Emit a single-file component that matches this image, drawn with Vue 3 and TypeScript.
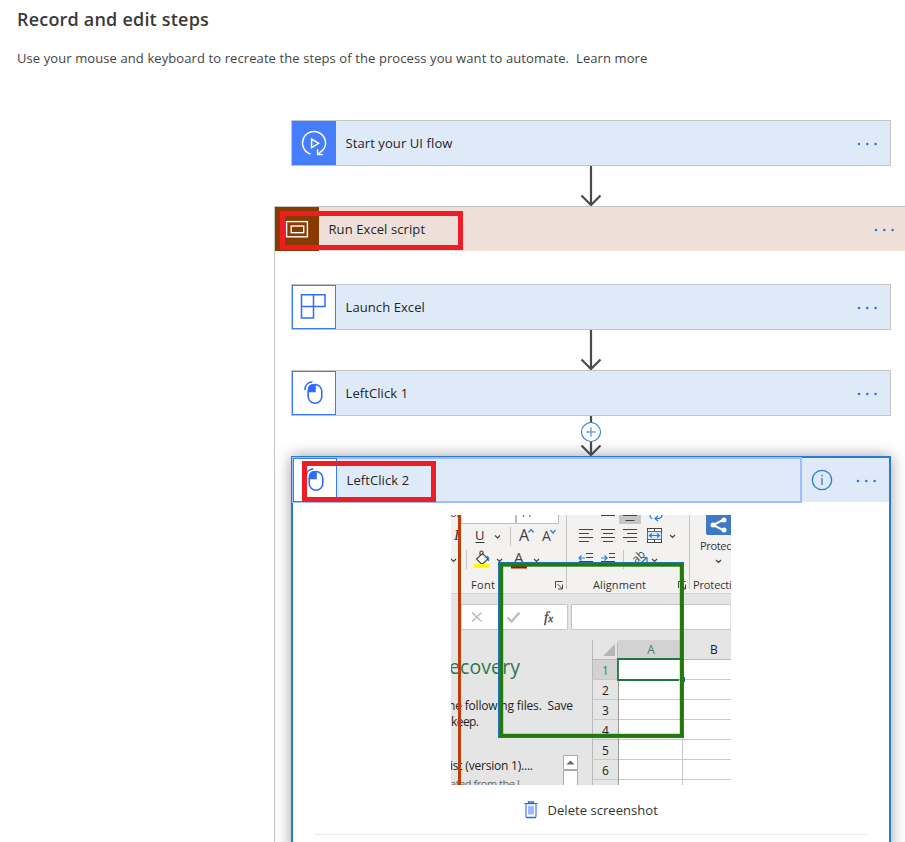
<script setup lang="ts">
interface Row { y: number; label: string }
const gridRows: Row[] = [
  { y: 670, label: '1' },
  { y: 690.5, label: '2' },
  { y: 710.5, label: '3' },
  { y: 730.5, label: '4' },
  { y: 750.5, label: '5' },
  { y: 770.5, label: '6' },
]
const lineYs: number[] = [679.5, 699.5, 719.5, 739.5, 759.5, 779.5]
const mouseBody = 'M23 13.5h0a6.8 6.8 0 0 1 6.8 6.8v5.2a6.8 6.8 0 0 1-13.6 0v-5.2a6.8 6.8 0 0 1 6.8-6.8z'
const mouseButton = 'M23.8 13.3v8h-8v-3c0-3 2-5 5-5z'
const mouseWave = 'M12.9 19c.2-4.600 3-8 7.500-8.300'
</script>

<template>
  <main class="page">
    <h1 class="title"><span>Record and edit steps</span></h1>
    <p class="intro">Use your mouse and keyboard to recreate the steps of the process you want to automate.&nbsp; <a>Learn more</a></p>

    <section class="flow">
      <div class="card first">
        <div class="tile solid">
          <svg viewBox="0 0 44 44" fill="none" stroke="#fff" stroke-width="1.500">
            <path d="M18.600 33A11.500 11.500 0 1 1 32.300 27.200C30.800 29.800 28.500 31 25.600 33.300" />
            <path d="M25.600 28.300v5.200h5.200M19.600 18v8.600l7-4.300z" />
          </svg>
        </div>
        <span class="label">Start your UI flow</span>
        <svg class="dots" viewBox="0 0 20 4"><circle cx="2" cy="2" r="1.300" /><circle cx="10.300" cy="2" r="1.300" /><circle cx="18.600" cy="2" r="1.300" /></svg>
      </div>
      <svg class="arrow" viewBox="0 0 24 40"><path d="M12 0v38M2.500 29.500l9.500 9.500 9.500-9.500" /></svg>

      <div class="scope">
        <div class="scope-head">
          <div class="tile brown">
            <svg viewBox="0 0 44 44" fill="none" stroke="#fff" stroke-width="1.400">
              <rect x="11.600" y="14.600" width="20.800" height="15.200" />
              <rect x="16.200" y="19" width="12.500" height="6.700" />
            </svg>
          </div>
          <span class="label">Run Excel script</span>
          <svg class="dots" viewBox="0 0 20 4"><circle cx="2" cy="2" r="1.300" /><circle cx="10.300" cy="2" r="1.300" /><circle cx="18.600" cy="2" r="1.300" /></svg>
          <span class="mark mark-scope"></span>
        </div>

        <div class="steps">
          <div class="card">
            <div class="tile">
              <svg viewBox="0 0 44 44" fill="none" stroke="#2f6bff" stroke-width="1.500">
                <path d="M9.500 9.800h23.500v11.700H9.500zM9.500 21.500v11.500h12V9.800" />
              </svg>
            </div>
            <span class="label">Launch Excel</span>
            <svg class="dots" viewBox="0 0 20 4"><circle cx="2" cy="2" r="1.300" /><circle cx="10.300" cy="2" r="1.300" /><circle cx="18.600" cy="2" r="1.300" /></svg>
          </div>
          <svg class="arrow" viewBox="0 0 24 40"><path d="M12 0v38M2.500 29.500l9.500 9.500 9.500-9.500" /></svg>

          <div class="card">
            <div class="tile">
              <svg viewBox="0 0 44 44" fill="none" stroke="#2f6bff" stroke-width="1.600">
                <path :d="mouseBody" /><path :d="mouseButton" fill="#2f6bff" stroke="none" /><path :d="mouseWave" />
              </svg>
            </div>
            <span class="label">LeftClick 1</span>
            <svg class="dots" viewBox="0 0 20 4"><circle cx="2" cy="2" r="1.300" /><circle cx="10.300" cy="2" r="1.300" /><circle cx="18.600" cy="2" r="1.300" /></svg>
          </div>
          <svg class="arrow" viewBox="0 0 24 40">
            <path d="M12 0v38M2.500 29.500l9.500 9.500 9.500-9.500" />
            <circle cx="12" cy="16" r="9.500" fill="#fff" stroke="#2b7de0" />
            <path class="plus" d="M7.300 16h9.400M12 11.300v9.400" />
          </svg>

          <div class="selected">
            <div class="selected-head">
              <div class="focus">
                <div class="tile">
                  <svg viewBox="0 0 44 44" fill="none" stroke="#2f6bff" stroke-width="1.600">
                    <path :d="mouseBody" /><path :d="mouseButton" fill="#2f6bff" stroke="none" /><path :d="mouseWave" />
                  </svg>
                </div>
                <span class="label">LeftClick 2</span>
              </div>
              <svg class="info" viewBox="0 0 22 22"><circle cx="11" cy="11" r="9.700" /><path d="M11 9v7M11 5.800v1.700" /></svg>
              <svg class="dots" viewBox="0 0 20 4"><circle cx="2" cy="2" r="1.300" /><circle cx="10.300" cy="2" r="1.300" /><circle cx="18.600" cy="2" r="1.300" /></svg>
              <span class="mark mark-click"></span>
            </div>

            <svg class="shot" viewBox="451 515 280 270">
              <rect x="451" y="515" width="280" height="270" fill="#e5e5e5" />
              <rect x="451" y="515" width="280" height="78" fill="#f3f2f1" />
              <path d="M451 593.500h280" stroke="#d2d2d2" />
              <!-- ribbon, font group -->
              <path d="M461 515v8.500h54.500V515M516.500 515v8.500h42V515" fill="#fff" stroke="#bdbdbd" />
              <g fill="#444" font-size="11"><text x="450" y="517">or</text><text x="520" y="517">11</text></g>
              <text x="454" y="540" class="serif">I</text>
              <text x="475" y="540" font-size="13" fill="#333">U</text>
              <path d="M475.500 542.500h9" stroke="#333" />
              <text x="519" y="541" font-size="16" fill="#444">A</text>
              <text x="542" y="541" font-size="14" fill="#444">A</text>
              <path d="M528.500 532.500l2.500-3 2.500 3M550.500 530l2.500 3 2.500-3" class="blue" />
              <path d="M510.500 527v19M466.500 550v19M566.500 515v74M689.500 515v74M623.500 550v19" stroke="#c8c6c4" />
              <g class="chev">
                <path d="M495 535.500l2.500 2.500 2.500-2.500M497 559l2.500 2.500 2.500-2.500M534 559l2.500 2.500 2.500-2.500M451 559l2.500 2.500 2.500-2.500M670 535l2.500 2.500 2.500-2.500M652 559l2.500 2.500 2.500-2.500M716 560l2.500 2.500 2.500-2.500" />
              </g>
              <path d="M476.500 559l6-5.500 5.500 5.500-6 5.500zM480 556v-4q1.500-2 3 0v3" fill="#fff" stroke="#444" stroke-width="1.200" />
              <path d="M487 556q2.500 2 1.500 5" class="blue" />
              <rect x="474" y="564" width="16" height="4" fill="#ff0" />
              <text x="514" y="563" font-size="15" fill="#444">A</text>
              <rect x="511" y="565" width="16" height="3.500" fill="#c00000" />
              <text x="471" y="589" textLength="24">Font</text>
              <path d="M555.500 588v-6.500h7M557.500 584l5 5m0-4.500v4.500h-4.500" class="thin" />
              <!-- ribbon, alignment group -->
              <rect x="619" y="515" width="22" height="9" fill="#c8c6c4" />
              <path d="M601 515.500h14M623 515.500h14M625.500 520.500h9" class="dark" />
              <path d="M579 529.500h14M579 533.500h10M579 537.500h14M579 541.500h10M601 529.500h14M603 533.500h10M601 537.500h14M603 541.500h10M623 529.500h14M627 533.500h10M623 537.500h14M627 541.500h10" class="dark" />
              <path d="M586 553.500h7M586 557.500h7M579 561.500h14M609 553.500h6M609 557.500h6M601 561.500h14" class="dark" />
              <path d="M585 558h-6m2.500-2.500L579 558l2.500 2.500M601 558h6m-2.500-2.500L607 558l-2.500 2.500" class="blue" />
              <path d="M650 515q0 3.500 2.500 3.500M658 516l-3 2.500 3 2.500M655 518.500h4q3-.5 3-3.500" class="blue" />
              <rect x="647.500" y="528.500" width="14" height="14" fill="#fff" stroke="#444" />
              <path d="M654.500 528.500v14" stroke="#444" />
              <rect x="647.500" y="531.500" width="14" height="8" fill="#d8ebfa" stroke="#2e75b6" />
              <path d="M649.500 535.500h10m-7.500-2l-2.500 2 2.500 2m5-4l2.500 2-2.500 2" class="blue" />
              <text font-size="11.500" fill="#444" transform="translate(636 564) rotate(-42)">ab</text>
              <path d="M640 564l7-6.500m-4.500 0h4.500v4.500" class="blue" />
              <text x="593" y="589" textLength="53">Alignment</text>
              <path d="M678.500 588v-6.500h7M680.500 584l5 5m0-4.500v4.500h-4.500" class="thin" />
              <!-- ribbon, protection group -->
              <path d="M706 515h25v20h-23q-2 0-2-2z" fill="#3f78c6" />
              <path d="M723 520l-10 5 10 5" fill="none" stroke="#fff" stroke-width="2" />
              <g fill="#fff"><circle cx="724" cy="520" r="2.500" /><circle cx="713" cy="525" r="2.500" /><circle cx="724" cy="530" r="2.500" /></g>
              <text x="700" y="550" textLength="35">Protect</text>
              <text x="693" y="589" textLength="52">Protection</text>
              <!-- formula bar -->
              <path d="M461 604.500h106.500v25H461zM571.500 604.500H731v25H571.500z" fill="#fff" stroke="#c6c6c6" />
              <path d="M472 612.500l9.500 9M481.500 612.500l-9.500 9" stroke="#bdbdbd" stroke-width="1.600" />
              <path d="M507.500 617.500l4 4 8-9" fill="none" stroke="#bdbdbd" stroke-width="2.400" />
              <text x="544" y="621.500" class="fx">f<tspan font-size="11">x</tspan></text>
              <!-- worksheet -->
              <rect x="618" y="659" width="113" height="126" fill="#fff" />
              <rect x="618" y="640" width="65" height="19" fill="#d2d2d2" />
              <rect x="593" y="660" width="25" height="19" fill="#d2d2d2" />
              <path d="M615 644v12h-12z" fill="#b6b6b6" />
              <path d="M592.500 640v145M592.500 659.500H731M617.500 642v17" stroke="#b8b8b8" fill="none" />
              <path d="M682.500 642v143" stroke="#c6c6c6" />
              <path v-for="y in lineYs" :key="y" :d="`M592 ${y}h139`" stroke="#c9c9c9" />
              <path d="M618.500 680v105" stroke="#999" />
              <g text-anchor="middle" class="cells">
                <text x="651" y="654" class="green">A</text><text x="714" y="654">B</text>
                <text v-for="row in gridRows" :key="row.label" x="605.500" :y="row.y + 4.500" :class="{ green: row.label === '1' }">{{ row.label }}</text>
              </g>
              <path d="M683 659h-65v21h61" fill="none" stroke="#217346" stroke-width="1.800" />
              <rect x="681" y="677" width="4" height="5" fill="#1f6190" />
              <!-- recovery pane -->
              <text x="449" y="674" textLength="71" class="recovery">ecovery</text>
              <text x="448" y="710" textLength="125" class="pane">ne following files.&nbsp; Save</text>
              <text x="451" y="726" textLength="28" class="pane">keep.</text>
              <text x="450" y="770" textLength="83" class="pane">ist (version 1)....</text>
              <text x="450" y="788" textLength="77" fill="#666">ated from the l...</text>
              <path d="M563.500 755.500h14v14h-14zM563.500 770.500h14V786h-14z" fill="#fff" stroke="#aaa" />
              <path d="M566.500 764.500l4-4 4 4z" fill="#666" />
              <!-- capture frame -->
              <rect x="458" y="515" width="3" height="270" fill="#c03c08" />
              <rect x="499" y="563" width="184" height="174" fill="none" stroke="#2070b8" stroke-width="2" />
              <rect x="501.500" y="565" width="180" height="170.500" fill="none" stroke="#227a0c" stroke-width="3.400" />
            </svg>

            <div class="delete">
              <svg viewBox="0 0 14 18">
                <path d="M2 3.500v12.500M12 3.500v12.500" stroke="#8eacf8" stroke-width="2" />
                <rect x="4" y="5" width="6" height="8.500" fill="#a3b9f6" />
                <path d="M.5 2.700h13M4.500 2.500V1h5v1.500M2 16.500h10" fill="none" stroke="#2f63e8" stroke-width="1.300" />
              </svg>
              <span>Delete screenshot</span>
            </div>
            <div class="rule"></div>
          </div>
        </div>
      </div>
    </section>
  </main>
</template>

<style>
body { background: #fff; overflow: hidden; }
</style>

<style scoped>
* { box-sizing: border-box; }
.page { width: 905px; height: 842px; overflow: hidden; display: flex; flex-direction: column; background: #fff; color: #252525; font: 13px/20px "Open Sans", "Noto Sans", sans-serif; }
svg { display: block; flex: none; }
.title { margin: 0; padding: 7px 0 0 17px; font-size: 18px; line-height: 24px; font-weight: 600; color: #3a3a3a; letter-spacing: .2px; }
.intro { margin: 17px 0 0 17px; height: 20px; color: #444; white-space: nowrap; letter-spacing: .095px; }
.flow { margin-top: 52px; display: flex; flex-direction: column; }
.card { width: 600px; height: 46px; border: 1px solid #c5c5c5; background: #dfeaf8; display: flex; align-items: center; }
.first { margin-left: 291px; }
.tile { width: 44px; height: 44px; flex: none; background: #fff; border: 1px solid #3a7bfd; }
.tile svg { width: 44px; height: 44px; margin: -1px; }
.solid { background: #467dfc; border-color: #467dfc; }
.brown { background: #883a00; border-color: #883a00; }
.label { flex: 1; padding-left: 9.500px; white-space: nowrap; letter-spacing: .09px; }
.dots { width: 20px; height: 4px; margin: 2px 13px 0 0; fill: #2b78d8; }
.arrow { width: 24px; height: 40px; margin-left: 288px; fill: none; stroke: #4a4a4a; stroke-width: 2.200; }
.arrow circle { stroke-width: 1.100; }
.arrow .plus { stroke: #6ea3e8; stroke-width: 1.500; }
.flow > .arrow { margin-left: 579px; }
.scope { margin-left: 274px; width: 648px; height: 640px; border-left: 1px solid #c5c5c5; border-top: 1px solid #c5c5c5; }
.scope-head { position: relative; height: 44px; background: #eee0d9; display: flex; align-items: center; }
.scope-head .dots { margin-right: 28px; }
.steps { padding: 33px 0 0 16px; }
.mark { position: absolute; z-index: 2; border: 5px solid #ee1c25; }
.mark-scope { left: 5px; top: 4px; width: 183px; height: 39px; }
.mark-click { left: 9px; top: 3px; width: 134px; height: 41px; }
.selected { width: 600px; height: 420px; border: 2px solid #2b78d6; background: #fff; box-shadow: 0 0 14px rgba(0, 0, 0, .38); display: flex; flex-direction: column; }
.selected-head { position: relative; height: 44px; background: #dfeaf8; display: flex; align-items: center; }
.focus { width: 510px; height: 46px; flex: none; display: flex; align-items: center; outline: 2px solid #9dbcfd; outline-offset: -2px; margin: 0 0 0 -1px; }
.focus .tile { position: relative; z-index: 1; margin-left: 1px; }
.info { width: 22px; height: 22px; margin: 0 auto 0 9px; fill: none; stroke: #2b78d8; stroke-width: 1.300; }
.selected .dots { margin-right: 13px; }
.shot { width: 280px; height: 270px; margin: 13px 0 0 158px; font-family: "Open Sans", sans-serif; font-size: 11px; fill: #333; }
.shot .serif { font: italic 15px "Liberation Serif", serif; }
.shot .fx { font: italic 15px "Liberation Serif", serif; fill: #444; stroke: #444; stroke-width: .3; }
.shot .blue { fill: none; stroke: #2b7cd3; stroke-width: 1.200; }
.shot .dark { stroke: #444; stroke-width: 1.200; }
.shot .thin { fill: none; stroke: #444; }
.shot .chev { fill: none; stroke: #444; stroke-width: 1.200; }
.shot .cells { font-size: 12px; fill: #222; }
.shot .green { fill: #4d7a64; }
.shot .recovery { font-size: 19.500px; fill: #2d7750; }
.shot .pane { font-size: 12px; fill: #222; }
.delete { display: flex; align-items: center; gap: 9.500px; margin: 15px 0 0 231px; height: 20px; color: #333; letter-spacing: .05px; }
.delete svg { width: 14px; height: 18px; }
.rule { height: 1px; margin: 14px 20px 0 21px; background: #ededed; }
</style>
